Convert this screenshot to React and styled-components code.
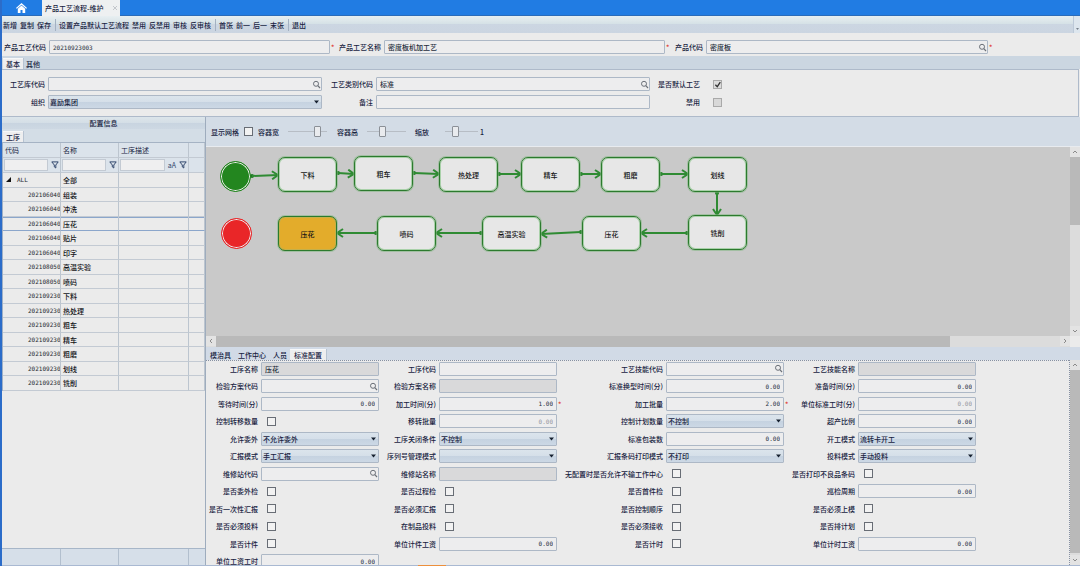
import React from "react";
import styled, { createGlobalStyle, css } from "styled-components";

const Global = createGlobalStyle`
  *, *::before, *::after { box-sizing: border-box; }
  html { -webkit-text-size-adjust: none; }
  body { margin: 0; background: #ebebeb; }
  body, button, input, select {
    font-family: "Noto Sans CJK SC", "Liberation Sans", sans-serif;
    font-size: 7px;
    font-weight: 500;
    line-height: 10px;
    color: #18233f;
  }
`;

const ink = "#18233f";
const line = "#adb8c6";
const mono = css`
  font-family: "DejaVu Sans Mono", "Liberation Mono", monospace;
  font-size: 6px;
  font-weight: 400;
`;

const Page = styled.div`
  display: flex;
  flex-direction: column;
  height: 100vh;
  overflow: hidden;
  border-left: 2px solid #2b6cc9;
  background: #ebebeb;
`;

const BottomEdge = styled.footer`
  flex: none;
  height: 1px;
  padding-left: 416px;
  background: #a9b9d2;
  i { display: block; width: 28px; height: 1px; background: #ec8f3c; }
`;

const TitleBar = styled.header`
  display: flex;
  flex: none;
  height: 16px;
  background: #217ce3;
  border-bottom: 1px solid #2a6cba;
  padding-left: 14px;
  gap: 20px;
`;

const HomeLink = styled.a`
  display: flex;
  align-items: center;
  width: 11px;
  margin-right: -5px;
  color: #fff;
`;

const PageTab = styled.div`
  display: flex;
  align-items: center;
  justify-content: space-between;
  width: 78px;
  height: 16px;
  padding: 0 2px 0 3px;
  background: #eef0f1;
  white-space: nowrap;
`;

const PlainButton = styled.button`
  display: flex;
  align-items: center;
  flex: none;
  border: 0;
  padding: 0;
  background: none;
  color: ${ink};
  white-space: nowrap;
`;

const Commands = styled.nav`
  display: flex;
  flex: none;
  align-items: center;
  gap: 3px;
  height: 17px;
  padding-left: 1px;
  background: linear-gradient(#e8eff1 0, #d5e1e6 8px, #ccd6e2 8px, #cbd5e1 100%);
`;

const Divider = styled.i`
  width: 1px;
  height: 12px;
  margin-left: 1px;
  background: #a3b1c2;
`;

const Spacer = styled.span`
  flex: 1;
`;

const Corner = styled.span`
  display: flex;
  align-items: flex-end;
  justify-content: center;
  width: 7px;
  height: 17px;
  padding-bottom: 2px;
  background: #dde6ee;
  border-left: 1px solid #bcc9d8;
  svg { width: 3px; opacity: 0.5; }
`;

const HeadForm = styled.section`
  display: grid;
  flex: none;
  grid-template-columns: 47fr 281fr 54fr 281fr 41fr 282fr 92fr;
  align-items: center;
  height: 23px;
  padding-top: 5px;
`;

const LabelText = styled.label`
  text-align: right;
  white-space: nowrap;
  padding-right: 3px;
  color: ${ink};
`;

const Required = styled.i`
  position: absolute;
  left: 100%;
  top: 1px;
  padding-left: 2px;
  font-style: normal;
  color: #e0312b;
`;

const Box = styled.span`
  position: relative;
  display: flex;
  align-items: center;
  min-width: 0;
  height: 14px;
  border: 1px solid ${line};
  border-radius: 1px;
  background: ${(p) => (p.$tone === "off" ? "#d9d9da" : p.$tone === "pick" ? "linear-gradient(#dbe4ec 0, #d5dfe9 50%, #c5d2e0 50%, #ccd8e5 100%)" : "#ededee")};
  svg { position: absolute; right: ${(p) => (p.$tone === "pick" ? 2 : 0)}px; pointer-events: none; }
`;

const TextInput = styled.input`
  flex: 1;
  min-width: 0;
  width: 100%;
  height: 12px;
  border: 0;
  padding: 0 3px;
  background: transparent;
  outline: 0;
  ${(p) => p.$code && mono}
  ${(p) => p.$num && css`text-align: right;`}
  color: ${(p) => (p.$dim ? "#94979d" : "#262d3c")};
`;

const Picker = styled.select`
  appearance: none;
  flex: 1;
  min-width: 0;
  height: 12px;
  border: 0;
  padding: 0 1px;
  background: transparent;
  outline: 0;
  color: ${ink};
`;

const Tick = styled.input.attrs({ type: "checkbox" })`
  appearance: none;
  flex: none;
  display: block;
  width: 9px;
  height: 9px;
  margin: 0 0 0 ${(p) => p.$inset || 0}px;
  border: 1px solid ${(p) => (p.disabled ? "#a9a9a9" : "#686d75")};
  background: ${(p) => (p.disabled ? "#d8d8d8" : "#f2f2f2")};
  &:checked {
    background: #dcdcdc
      url("data:image/svg+xml,%3Csvg xmlns='http://www.w3.org/2000/svg' viewBox='0 0 9 9'%3E%3Cpath d='M2 4.5l2 2 3.2-4.7' fill='none' stroke='%23333' stroke-width='1.4'/%3E%3C/svg%3E")
      center / 8px no-repeat;
  }
`;

const TabStrip = styled.div`
  display: flex;
  flex: none;
  align-items: flex-end;
  height: ${(p) => p.$h}px;
  padding-left: 1px;
  background: ${(p) => p.$bg || "#cbd6e1"};
`;

const Tab = styled.button`
  flex: none;
  height: 11px;
  border: 0;
  padding: 0 ${(p) => p.$pad || 3}px;
  color: ${ink};
  white-space: nowrap;
  background: ${(p) => (p.$on ? "#eeeeef" : "transparent")};
  ${(p) => p.$on && css`box-shadow: inset 0 1px #f7f8f9, 1px 0 #b7c3d1;`}
`;

const BasicForm = styled.section`
  display: grid;
  flex: none;
  grid-template-columns: 46fr 274fr 54fr 274fr 53fr 375fr;
  grid-template-rows: 14px 14px;
  row-gap: 4px;
  align-items: center;
  padding: 7px 0;
  border: solid #aebaca;
  border-width: 1px 1px 1px 0;
  margin-right: 1px;
`;

const Main = styled.main`
  display: flex;
  flex: 1;
  min-height: 0;
`;

const Side = styled.aside`
  display: flex;
  flex: none;
  flex-direction: column;
  width: 204px;
  border-right: 1px solid #9eacbd;
`;

const SideTitle = styled.div`
  flex: none;
  height: 12px;
  line-height: 12px;
  text-align: center;
  background: linear-gradient(#dce5ea 0, #d4dee6 50%, #c8d4e0 50%, #cdd8e3 100%);
`;

const Tree = styled.table`
  flex: none;
  width: 100%;
  table-layout: fixed;
  border-collapse: separate;
  border-spacing: 0;
  border-top: 1px solid #a5b3c4;
  border-left: 1px solid #9fb0c6;

  th, td {
    height: 14px;
    padding: 0 0 0 2px;
    border-right: 1px solid #bcc5cf;
    border-bottom: 1px solid #c3cad3;
    overflow: hidden;
    white-space: nowrap;
    text-align: left;
    line-height: 10px;
  }
  th { height: 15px; font-weight: 400; background: #dbe3eb; }
  tbody tr:nth-child(odd) td { height: 15px; }
  tbody td { color: #101216; }
`;

const TreeRow = styled.tr`
  ${(p) => p.$on && css`
    && td { border-bottom-color: #8ba6cb; box-shadow: inset 0 1px #8ba6cb; }
  `}
`;

const CodeCell = styled.td`
  ${mono}
  && { padding-left: ${(p) => (p.$root ? 3 : 25)}px; color: #25292f; }
  svg { margin-right: 6px; }
`;

const Filter = styled.span`
  display: flex;
  align-items: center;
  gap: 3px;
  padding-right: 1px;
  color: #31476d;
  input {
    flex: 1;
    min-width: 0;
    height: 12px;
    border: 1px solid #c3cad3;
    margin-left: -1px;
    background: #efeff0;
  }
`;

const SideFoot = styled.div`
  display: grid;
  flex: none;
  grid-template-columns: 59px 58px 70px 1fr;
  height: 17px;
  margin-top: auto;
  border-top: 1px solid #a7b6c8;
  background: #d6dfe9;
  span { border-right: 1px solid #b2bfce; }
`;

const Work = styled.div`
  display: flex;
  flex: 1;
  flex-direction: column;
  min-width: 0;
`;

const CanvasTools = styled.div`
  display: flex;
  flex: none;
  align-items: center;
  height: 30px;
  padding-left: 5px;
  background: #d3dce6;
  border-bottom: 1px solid #e8ebef;
`;

const ToolGroup = styled.label`
  display: flex;
  align-items: center;
  gap: ${(p) => p.$gap}px;
  margin-right: ${(p) => p.$after}px;
  white-space: nowrap;
  > span { min-width: 21px; }
`;

const Range = styled.input.attrs({ type: "range" })`
  appearance: none;
  width: ${(p) => p.$w}px;
  height: 11px;
  margin: 0;
  background: linear-gradient(#b7bdc5, #b7bdc5) center / 100% 1px no-repeat;
  &::-webkit-slider-thumb {
    appearance: none;
    width: 7px;
    height: 11px;
    border: 1px solid #8b9097;
    border-radius: 1px;
    background: #e9ebee;
  }
`;

const Stage = styled.div`
  display: grid;
  flex: none;
  grid-template-columns: 1fr 10px;
  grid-template-rows: 189px 11px;
`;

const Canvas = styled.div`
  position: relative;
  overflow: hidden;
  background: #c9c9c9;
  > svg { position: absolute; left: 0; top: 0; }
`;

const Node = styled.div`
  position: absolute;
  left: ${(p) => p.$x}px;
  top: ${(p) => p.$y}px;
  display: flex;
  align-items: center;
  justify-content: center;
  width: 59px;
  height: 35px;
  border: 1px solid #2c7a2e;
  border-radius: 7px;
  box-shadow: 0 0 0 1px #7fb57f88, inset 0 0 0 1px ${(p) => (p.$on ? "#c5b04a" : "#a9d1a9")};
  background: ${(p) => (p.$on ? "#e3ac2b" : "#e7e7e7")};
  color: #151515;
`;

const Dot = styled.div`
  position: absolute;
  left: ${(p) => p.$x}px;
  top: ${(p) => p.$y}px;
  width: 31px;
  height: 31px;
  border: 1px solid ${(p) => p.$c};
  border-radius: 50%;
  background: ${(p) => p.$c};
  box-shadow: inset 0 0 0 1px #ededed;
`;

const Bar = styled.div`
  display: flex;
  flex-direction: ${(p) => (p.$v ? "column" : "row")};
  align-items: stretch;
  min-height: 0;
  background: #dcdcdc;
  i { background: #b9b9b9; flex: ${(p) => p.$thumb} 1 0; }
  b { flex: ${(p) => 100 - p.$thumb} 1 0; }
`;

const Arrow = styled.button`
  display: flex;
  flex: none;
  align-items: center;
  justify-content: center;
  width: 10px;
  height: 10px;
  border: 0;
  padding: 0;
  background: #e3e3e3;
  svg { transform: rotate(${(p) => p.$turn}deg); }
`;

const Detail = styled.div`
  display: grid;
  flex: 1;
  grid-template-columns: 1fr 10px;
  grid-template-rows: minmax(0, 1fr);
  min-height: 0;
`;

const DetailForm = styled.form`
  display: grid;
  grid-template-columns: 55fr 118fr 60fr 118fr 109fr 118fr 74fr 118fr 94fr;
  grid-auto-rows: 17px 18px;
  align-items: center;
  overflow: hidden;
  background:
    repeating-linear-gradient(90deg, #8791a3 0 1px, transparent 1px 2px) top / 100% 1px no-repeat,
    repeating-linear-gradient(#8791a3 0 1px, transparent 1px 2px) right / 1px 100% no-repeat,
    #ebebeb;
`;

const Search = () => (
  <svg width="9" height="9" viewBox="0 0 9 9" fill="none" stroke="#6b7078">
    <circle cx="4" cy="3.8" r="2.5" />
    <path d="M5.8 5.7L8 8" strokeWidth="1.2" />
  </svg>
);
const Caret = () => (
  <svg width="5" height="4" viewBox="0 0 5 4"><path d="M0 .5h5L2.500 3.500z" fill="#15202f" /></svg>
);
const Funnel = () => (
  <svg width="8" height="8" viewBox="0 0 8 8" fill="none" stroke="#31476d">
    <path d="M.8 .9h6.400L4.800 4v3L3.300 5.900V4z" />
  </svg>
);
const Chevron = () => (
  <svg width="6" height="6" viewBox="0 0 6 6" fill="none" stroke="#8a8a8a"><path d="M1 4l2-2 2 2" /></svg>
);

function Scroll({ vertical, thumb }) {
  return (
    <Bar $v={vertical} $thumb={thumb}>
      <Arrow type="button" $turn={vertical ? 0 : -90} aria-label="向前滚动"><Chevron /></Arrow>
      <i /><b />
      <Arrow type="button" $turn={vertical ? 180 : 90} aria-label="向后滚动"><Chevron /></Arrow>
    </Bar>
  );
}

function Field({ id, label, kind = "text", value = "", star, dim, inset = 6 }) {
  let control;
  if (kind === "check") control = <Tick id={id} $inset={inset} defaultChecked={!!value} disabled={dim} />;
  else if (kind === "select")
    control = (
      <Box $tone="pick">
        <Picker id={id} defaultValue={value}><option>{value}</option></Picker>
        <Caret />
      </Box>
    );
  else
    control = (
      <Box $tone={kind === "off" ? "off" : "in"}>
        <TextInput id={id} defaultValue={value} $dim={dim} $num={kind === "num"} $code={kind === "num" || kind === "code"} readOnly={kind === "off"} />
        {kind === "search" && <Search />}
        {star && <Required>*</Required>}
      </Box>
    );
  return (
    <>
      <LabelText htmlFor={id}>{label}</LabelText>
      {control}
    </>
  );
}

const commands = [
  ["新增", "复制", "保存"],
  ["设置产品默认工艺流程", "禁用", "反禁用", "审核", "反审核"],
  ["首张", "前一", "后一", "末张"],
  ["退出"],
];

const steps = [
  ["202106040", "组装"], ["202106040", "冲洗"], ["202106040", "压花"], ["202106040", "贴片"],
  ["202106040", "印字"], ["202108050", "高温实验"], ["202108050", "喷码"], ["202109230", "下料"],
  ["202109230", "热处理"], ["202109230", "粗车"], ["202109230", "精车"], ["202109230", "粗磨"],
  ["202109230", "划线"], ["202109230", "铣削"],
];

const nodes = [
  [72, 10, "下料"], [148, 9, "粗车"], [233, 10, "热处理"], [315, 10, "精车"], [395, 10, "粗磨"], [482, 10, "划线"],
  [482, 68, "铣削"], [376, 69, "压花"], [276, 69, "高温实验"], [171, 69, "喷码"], [72, 69, "压花", true],
];

const edges = [
  [46, 29, 72, 28], [132, 26, 148, 27], [208, 26, 233, 27], [293, 27, 315, 27], [375, 27, 395, 27],
  [455, 27, 482, 27], [511, 46, 511, 68], [481, 86, 435, 86], [375, 85, 335, 87], [275, 86, 230, 86], [170, 86, 131, 86],
];

const details = [
  ["工序名称", "off", "压花"], ["工序代码"], ["工艺技能代码", "search"], ["工艺技能名称", "off"],
  ["检验方案代码", "search"], ["检验方案名称", "off"], ["标准换型时间(分)", "num", "0.00"], ["准备时间(分)", "num", "0.00"],
  ["等待时间(分)", "num", "0.00"], ["加工时间(分)", "num", "1.00", { star: true }], ["加工批量", "num", "2.00", { star: true }], ["单位标准工时(分)", "num", "0.00", { dim: true }],
  ["控制转移数量", "check"], ["移转批量", "num", "0.00", { dim: true }], ["控制计划数量", "select", "不控制"], ["超产比例", "num", "0.00"],
  ["允许委外", "select", "不允许委外"], ["工序关闭条件", "select", "不控制"], ["标准包装数", "num", "0.00"], ["开工模式", "select", "流转卡开工"],
  ["汇报模式", "select", "手工汇报"], ["序列号管理模式", "select", ""], ["汇报条码打印模式", "select", "不打印"], ["投料模式", "select", "手动投料"],
  ["维修站代码", "search"], ["维修站名称", "off"], ["无配置时是否允许不输工作中心", "check"], ["是否打印不良品条码", "check"],
  ["是否委外检", "check"], ["是否过程检", "check"], ["是否首件检", "check"], ["巡检周期", "num", "0.00"],
  ["是否一次性汇报", "check"], ["是否必须汇报", "check"], ["是否控制顺序", "check"], ["是否必须上模", "check"],
  ["是否必须投料", "check"], ["在制品投料", "check"], ["是否必须接收", "check"], ["是否排计划", "check"],
  ["是否计件", "check"], ["单位计件工资", "num", "0.00"], ["是否计时", "check"], ["单位计时工资", "num", "0.00"],
  ["单位工资工时", "num", "0.00"],
];

export default function App() {
  return (
    <Page>
      <Global />
      <TitleBar>
        <HomeLink href="#home" aria-label="首页">
          <svg width="11" height="10" viewBox="0 0 11 10" fill="currentColor">
            <path d="M5.500 0L0 5l.8.8L5.500 1.700l4.700 4.100L11 5zM5.500 2.600L1.800 5.800V10h2.700V7h2v3h2.700V5.800z" />
          </svg>
        </HomeLink>
        <PageTab>
          产品工艺流程-维护
          <PlainButton type="button" aria-label="关闭">
            <svg width="6" height="6" viewBox="0 0 6 6" stroke="#c3c7cc"><path d="M1 1l4 4M5 1L1 5" /></svg>
          </PlainButton>
        </PageTab>
      </TitleBar>

      <Commands>
        {commands.map((group, i) => (
          <React.Fragment key={i}>
            {i > 0 && <Divider />}
            {group.map((c) => <PlainButton type="button" key={c}>{c}</PlainButton>)}
          </React.Fragment>
        ))}
        <Spacer />
        <Corner><Caret /></Corner>
      </Commands>

      <HeadForm>
        <Field id="pcode" label="产品工艺代码" kind="code" value="20210923003" star />
        <Field id="pname" label="产品工艺名称" value="密度板机加工艺" star />
        <Field id="prod" label="产品代码" kind="search" value="密度板" star />
      </HeadForm>

      <TabStrip $h={13}>
        <Tab type="button" $on>基本</Tab>
        <Tab type="button">其他</Tab>
      </TabStrip>

      <BasicForm>
        <Field id="lib" label="工艺库代码" kind="search" />
        <Field id="cls" label="工艺类别代码" kind="search" value="标准" />
        <Field id="def" label="是否默认工艺" kind="check" value="1" dim inset={10} />
        <Field id="org" label="组织" kind="select" value="嘉励集团" />
        <Field id="memo" label="备注" />
        <Field id="off" label="禁用" kind="check" dim inset={10} />
      </BasicForm>

      <Main>
        <Side>
          <SideTitle>配置信息</SideTitle>
          <TabStrip $h={13} $bg="#d3dde6"><Tab type="button" $on>工序</Tab></TabStrip>
          <Tree>
            <colgroup>
              <col style={{ width: 58 }} /><col style={{ width: 58 }} /><col style={{ width: 70 }} /><col />
            </colgroup>
            <thead>
              <tr><th>代码</th><th>名称</th><th>工序描述</th><th /></tr>
              <tr>
                <th><Filter><input aria-label="筛选代码" /><Funnel /></Filter></th>
                <th><Filter><input aria-label="筛选名称" /><Funnel /></Filter></th>
                <th><Filter><input aria-label="筛选工序描述" />aA<Funnel /></Filter></th>
                <th />
              </tr>
            </thead>
            <tbody>
              <tr>
                <CodeCell $root>
                  <svg width="5" height="5" viewBox="0 0 5 5"><path d="M5 0v5H0z" fill="#111" /></svg>ALL
                </CodeCell>
                <td>全部</td><td /><td />
              </tr>
              {steps.map(([code, name], i) => (
                <TreeRow key={name} $on={i === 2}>
                  <CodeCell>{code}</CodeCell><td>{name}</td><td /><td />
                </TreeRow>
              ))}
            </tbody>
          </Tree>
          <SideFoot><span /><span /><span /></SideFoot>
        </Side>

        <Work>
          <CanvasTools>
            <ToolGroup $gap={5} $after={5}><span>显示网格</span><Tick /></ToolGroup>
            <ToolGroup $gap={9} $after={10}><span>容器宽</span><Range $w={39} defaultValue={82} /></ToolGroup>
            <ToolGroup $gap={9} $after={9}><span>容器高</span><Range $w={39} defaultValue={38} /></ToolGroup>
            <ToolGroup $gap={9} $after={2}><span>缩放</span><Range $w={33} defaultValue={26} /></ToolGroup>
            <output>1</output>
          </CanvasTools>

          <Stage>
            <Canvas>
              <svg width="864" height="189" fill="none" stroke="#2f8b33" strokeWidth="2">
                <defs>
                  <marker id="head" markerUnits="userSpaceOnUse" markerWidth="9" markerHeight="10" refX="7" refY="5" orient="auto">
                    <path d="M1 1l6 4-6 4" fill="none" stroke="#2f8b33" strokeWidth="2" />
                  </marker>
                </defs>
                {edges.map(([a, b, c, d]) => (
                  <g key={`${a}-${b}`}>
                    <circle cx={a} cy={b} r="2" fill="#1f7a24" stroke="none" />
                    <path d={`M${a} ${b}L${c} ${d}`} markerEnd="url(#head)" />
                  </g>
                ))}
              </svg>
              <Dot $x={14} $y={14} $c="#23861f" />
              <Dot $x={15} $y={71} $c="#e92628" />
              {nodes.map(([x, y, t, on]) => <Node key={`${x}-${y}`} $x={x} $y={y} $on={on}>{t}</Node>)}
            </Canvas>
            <Scroll vertical thumb={40} />
            <Scroll thumb={87} />
          </Stage>

          <TabStrip $h={13} $bg="#d1dae6">
            <Tab type="button">模治具</Tab>
            <Tab type="button" $pad={4}>工作中心</Tab>
            <Tab type="button">人员</Tab>
            <Tab type="button" $on $pad={4}>标准配置</Tab>
          </TabStrip>

          <Detail>
            <DetailForm>
              {details.map(([label, kind, value, extra], i) => (
                <React.Fragment key={label}>
                  <Field id={`d${i}`} label={label} kind={kind} value={value} {...extra} />
                  {i % 4 === 3 && <span />}
                </React.Fragment>
              ))}
            </DetailForm>
            <Scroll vertical thumb={99} />
          </Detail>
        </Work>
      </Main>
      <BottomEdge><i /></BottomEdge>
    </Page>
  );
}
